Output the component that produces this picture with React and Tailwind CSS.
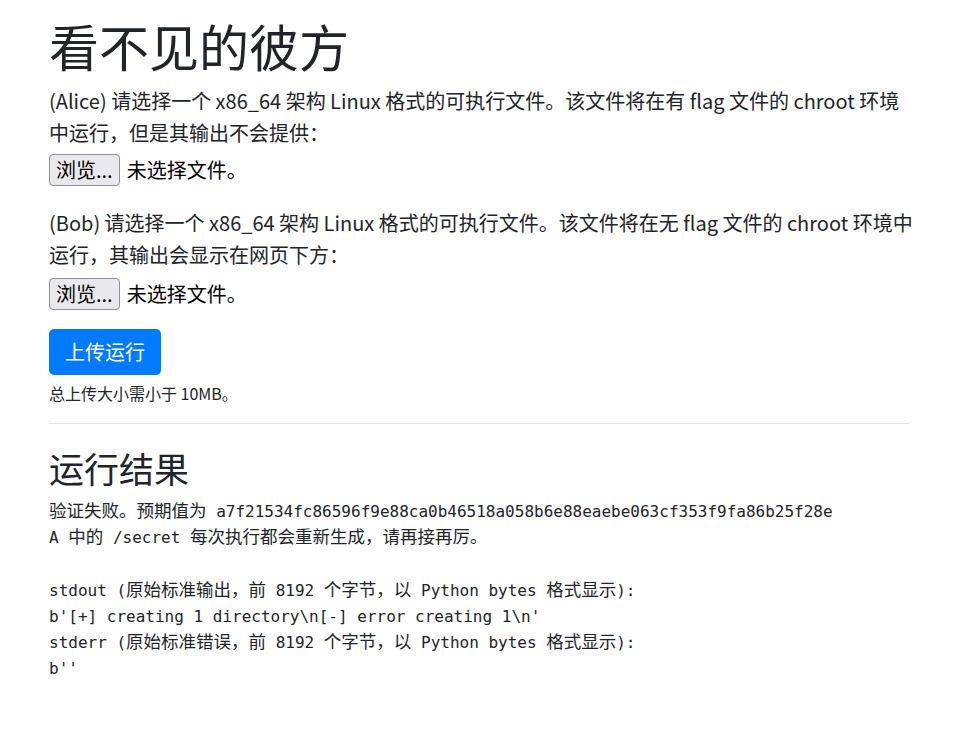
import React from 'react';

const FileInput = () => (
  <div className="flex items-center h-[32px]">
    <span className="h-[32px] px-[6px] flex items-center bg-[#e9e9ed] border border-[#8f8f9d] rounded-[4px] text-[20px] text-black">
      浏览...
    </span>
    <span className="ml-[7px] text-[20px] text-black">未选择文件。</span>
  </div>
);

const Cjk = ({ children }) => <span className="text-[17.5px] leading-[20px]">{children}</span>;

const App = () => {
  return (
    <div className="min-h-screen bg-white text-[#212529] font-['Noto_Sans_CJK_SC',sans-serif]">
      <div className="ml-[49px] w-[860px] pt-[15px]">
        <h1 className="text-[50px] leading-[1.2] font-normal mb-[10px]">看不见的彼方</h1>

        <p className="w-[866px] text-[20px] leading-[31.5px]">
          (Alice) 请选择一个 x86_64 架构 Linux 格式的可执行文件。该文件将在有 flag 文件的 chroot 环境中运行，但是其输出不会提供：
        </p>
        <div className="mt-[6px]">
          <FileInput />
        </div>

        <p className="w-[866px] mt-[21px] text-[20px] leading-[31.5px]">
          (Bob) 请选择一个 x86_64 架构 Linux 格式的可执行文件。该文件将在无 flag 文件的 chroot 环境中运行，其输出会显示在网页下方：
        </p>
        <div className="mt-[8px]">
          <FileInput />
        </div>

        <button className="mt-[19px] h-[46px] px-[16px] bg-[#007bff] text-white text-[20px] rounded-[5px]">
          上传运行
        </button>
        <p className="mt-[6px] text-[16px] leading-[24px]">总上传大小需小于 10MB。</p>

        <hr className="mt-[18px] border-0 border-t border-[#e5e5e5]" />

        <h2 className="mt-[23px] text-[35px] leading-[1.2] font-normal">运行结果</h2>

        <pre className="mt-[10px] text-[16px] leading-[26.2px] font-['DejaVu_Sans_Mono','Noto_Sans_CJK_SC',monospace] whitespace-pre">
          <Cjk>验证失败。预期值为</Cjk> a7f21534fc86596f9e88ca0b46518a058b6e88eaebe063cf353f9fa86b25f28e{'\n'}
          A <Cjk>中的</Cjk> /secret <Cjk>每次执行都会重新生成，请再接再厉。</Cjk>{'\n'}
          {'\n'}
          stdout (<Cjk>原始标准输出，前</Cjk> 8192 <Cjk>个字节，以</Cjk> Python bytes <Cjk>格式显示</Cjk>):{'\n'}
          b'[+] creating 1 directory\n[-] error creating 1\n'{'\n'}
          stderr (<Cjk>原始标准错误，前</Cjk> 8192 <Cjk>个字节，以</Cjk> Python bytes <Cjk>格式显示</Cjk>):{'\n'}
          b''
        </pre>
      </div>
    </div>
  );
};

export default App;
